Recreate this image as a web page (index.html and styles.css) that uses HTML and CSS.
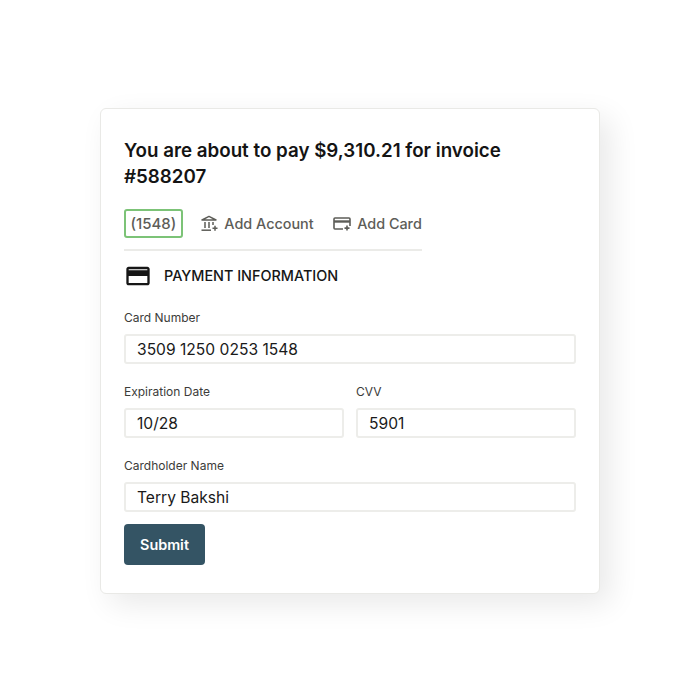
FILE: index.html
```html
<!DOCTYPE html>
<html lang="en">
<head>
<meta charset="utf-8">
<title>Payment</title>
<link rel="stylesheet" href="styles.css">
</head>
<body>
<main class="card">
  <h1 class="title">You are about to pay $9,310.21 for invoice #588207</h1>
  <nav class="tabs">
    <button class="tab tab-active" type="button">(1548)</button>
    <button class="tab" type="button">
      <svg class="icon-account" viewBox="0 0 17 18" fill="none" stroke="currentColor" stroke-width="1.5" aria-hidden="true">
        <path d="M1 5 8 1.4 15 5Z" stroke-linejoin="round"/>
        <path d="M4 7v6M8 7v6M12 7v3"/>
        <path d="M.5 15.2h9.5"/>
        <path d="M14 10.8v5M11.5 13.3h5"/>
      </svg>
      Add Account
    </button>
    <button class="tab" type="button">
      <svg class="icon-card" viewBox="0 0 19 18" fill="none" stroke="currentColor" stroke-width="1.6" aria-hidden="true">
        <path d="M11 14H3a1 1 0 0 1-1-1V4a1 1 0 0 1 1-1h14a1 1 0 0 1 1 1v7"/>
        <path d="M2 6.5h16" stroke-width="2.4"/>
        <path d="M15 10.6v5M12.5 13.1h5"/>
      </svg>
      Add Card
    </button>
  </nav>
  <header class="section">
    <svg class="section-icon" viewBox="0 0 24 24" aria-hidden="true">
      <path fill="#161616" fill-rule="evenodd" d="M20 4H4c-1.11 0-1.99.89-1.99 2L2 18c0 1.11.89 2 2 2h16c1.11 0 2-.89 2-2V6c0-1.11-.89-2-2-2zm0 14H4v-6h16v6zm0-10.9H4V6.2h16z"/>
    </svg>
    <h2 class="section-title">PAYMENT INFORMATION</h2>
  </header>
  <form class="form">
    <div class="fields">
      <div class="field">
        <label class="label">Card Number</label>
        <div class="input">3509 1250 0253 1548</div>
      </div>
      <div class="row">
        <div class="field">
          <label class="label">Expiration Date</label>
          <div class="input">10/28</div>
        </div>
        <div class="field">
          <label class="label">CVV</label>
          <div class="input">5901</div>
        </div>
      </div>
      <div class="field">
        <label class="label">Cardholder Name</label>
        <div class="input">Terry Bakshi</div>
      </div>
    </div>
    <button class="submit" type="button">Submit</button>
  </form>
</main>
</body>
</html>
```
FILE: styles.css
```css
* { box-sizing: border-box; }
html, body { margin: 0; height: 700px; background: #fff; overflow: hidden; }
body {
  font-family: Inter, "Liberation Sans", sans-serif;
  color: #161616;
  padding: 108px 100px 0;
}
.card {
  width: 500px;
  height: 486px;
  padding: 29px 23px 0;
  background: #fff;
  border: 1px solid #e9e9e6;
  border-radius: 6px;
  box-shadow: 10px 10px 30px rgba(0, 0, 0, .09);
}
.title {
  margin: 0;
  width: 420px;
  font-size: 18.75px;
  line-height: 26px;
  font-weight: 600;
  color: #141414;
}
.tabs {
  display: inline-flex;
  align-items: center;
  gap: 18.5px;
  margin-top: 19px;
  padding-bottom: 11px;
  border-bottom: 2px solid #ebebe8;
}
.tab {
  display: flex;
  align-items: center;
  gap: 6px;
  padding: 0;
  border: 0;
  background: none;
  font: 500 14.4px/20px Inter, "Liberation Sans", sans-serif;
  color: #5d5d58;
}
.tab-active {
  height: 29px;
  padding: 0 4.5px;
  border: 2px solid #7cc377;
  border-radius: 3px;
  font-size: 15px;
}
.icon-account { width: 17px; height: 18px; flex: none; }
.icon-card { width: 19px; height: 18px; flex: none; }
.section {
  display: flex;
  align-items: center;
  gap: 12px;
  margin-top: 11px;
}
.section-icon { width: 28px; height: 28px; flex: none; }
.section-title {
  margin: 0;
  font-size: 14.4px;
  line-height: 24px;
  font-weight: 500;
  color: #161616;
}
.form { display: flex; flex-direction: column; margin-top: 20px; gap: 12px; }
.fields { display: flex; flex-direction: column; gap: 20px; }
.row { display: grid; grid-template-columns: 220px 220px; gap: 12px; }
.field { display: flex; flex-direction: column; gap: 8px; }
.label { font-size: 12px; line-height: 16px; color: #3c3c3a; }
.input {
  height: 30px;
  padding: 0 11px;
  border: 2px solid #ededea;
  border-radius: 3px;
  font-size: 15.6px;
  line-height: 27px;
  color: #1a1a1a;
}
.submit {
  align-self: flex-start;
  width: 81px;
  height: 41px;
  border: 0;
  border-radius: 4px;
  background: #345464;
  color: #fff;
  font: 600 14.4px/20px Inter, "Liberation Sans", sans-serif;
}
```
